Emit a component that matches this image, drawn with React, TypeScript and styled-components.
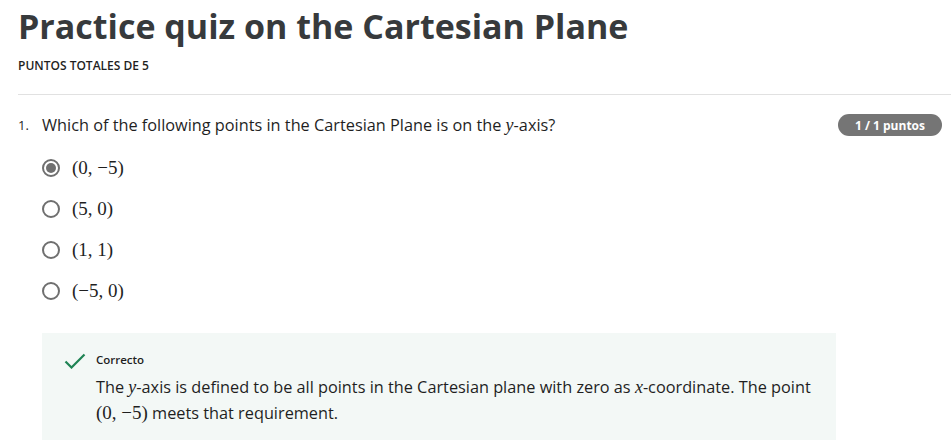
import React from "react";
import styled, { createGlobalStyle } from "styled-components";

const Global = createGlobalStyle`
  html, body { margin: 0; padding: 0; background: #ffffff; }
  body { font-family: "Open Sans", "Noto Sans", sans-serif; color: #1f1f1f; }
  * { box-sizing: border-box; }
`;

const Page = styled.div`
  padding: 6px 0 0 18px;
  width: 951px;
`;

const Title = styled.h1`
  margin: 0;
  font-family: "Open Sans", sans-serif;
  font-weight: 700;
  font-size: 34px;
  line-height: 40px;
  color: #373a3c;
`;

const Subtitle = styled.div`
  margin-top: 13px;
  font-family: "Open Sans", sans-serif;
  font-weight: 600;
  font-size: 12px;
  line-height: 14px;
  color: #1f1f1f;
`;

const Divider = styled.hr`
  margin: 21px 0 0 0;
  border: none;
  border-top: 1px solid #e1e1e1;
`;

const QuestionRow = styled.div`
  display: flex;
  align-items: center;
  margin-top: 19px;
  padding-right: 9px;
`;

const Number = styled.span`
  width: 24px;
  font-size: 13px;
  color: #1f1f1f;
`;

const QuestionText = styled.span`
  flex: 1;
  font-family: "Open Sans", sans-serif;
  font-size: 16.3px;
  color: #1f1f1f;
`;

const Badge = styled.span`
  height: 22px;
  padding: 0 17px;
  border-radius: 11px;
  background: #757575;
  color: #ffffff;
  font-weight: 700;
  font-size: 12px;
  display: inline-flex;
  align-items: center;
`;

const Options = styled.div`
  display: flex;
  flex-direction: column;
  gap: 19px;
  margin: 21px 0 0 24px;
`;

const Option = styled.label`
  display: flex;
  align-items: center;
  gap: 12px;
  height: 22px;
`;

const Radio = styled.span<{ $checked?: boolean }>`
  width: 18px;
  height: 18px;
  border-radius: 50%;
  border: 2px solid #6f6f6f;
  display: inline-flex;
  align-items: center;
  justify-content: center;
  &::after {
    content: "";
    width: 10px;
    height: 10px;
    border-radius: 50%;
    background: ${(p) => (p.$checked ? "#6f6f6f" : "transparent")};
  }
`;

const Math = styled.span`
  font-family: "Liberation Serif", "DejaVu Serif", serif;
  font-size: 19px;
  color: #1f1f1f;
`;

const MathI = styled.span`
  font-family: "Liberation Serif", serif;
  font-style: italic;
  font-size: 18px;
`;

const Feedback = styled.div`
  margin: 31px 0 0 24px;
  width: 794px;
  background: #f3f8f6;
  padding: 19px 24px 14px 22px;
  display: grid;
  grid-template-columns: 32px 1fr;
`;

const CheckCell = styled.div`
  display: flex;
  align-items: flex-start;
  padding-top: 1px;
`;

const FbLabel = styled.div`
  font-size: 11.5px;
  line-height: 16px;
  color: #1f1f1f;
  font-weight: 600;
`;

const FbText = styled.div`
  grid-column: 2;
  margin-top: 6px;
  font-size: 16.3px;
  line-height: 25px;
  color: #1f1f1f;
`;

const opts = ["(0, −5)", "(5, 0)", "(1, 1)", "(−5, 0)"];

export default function App() {
  return (
    <>
      <Global />
      <Page>
        <Title>Practice quiz on the Cartesian Plane</Title>
        <Subtitle>PUNTOS TOTALES DE 5</Subtitle>
        <Divider />
        <QuestionRow>
          <Number>1.</Number>
          <QuestionText>
            Which of the following points in the Cartesian Plane is on the <MathI>y</MathI>-axis?
          </QuestionText>
          <Badge>1 / 1 puntos</Badge>
        </QuestionRow>
        <Options>
          {opts.map((o, i) => (
            <Option key={o}>
              <Radio $checked={i === 0} />
              <Math>{o}</Math>
            </Option>
          ))}
        </Options>
        <Feedback>
          <CheckCell>
            <svg width="22" height="16" viewBox="0 0 22 16">
              <path d="M1.5 8.5 L7.5 14.5 L20.5 1.5" fill="none" stroke="#1f8354" strokeWidth="2.2" />
            </svg>
          </CheckCell>
          <FbLabel>Correcto</FbLabel>
          <FbText>
            The <MathI>y</MathI>-axis is defined to be all points in the Cartesian plane with zero as{" "}
            <MathI>x</MathI>-coordinate. The point <Math>(0, −5)</Math> meets that requirement.
          </FbText>
        </Feedback>
      </Page>
    </>
  );
}
